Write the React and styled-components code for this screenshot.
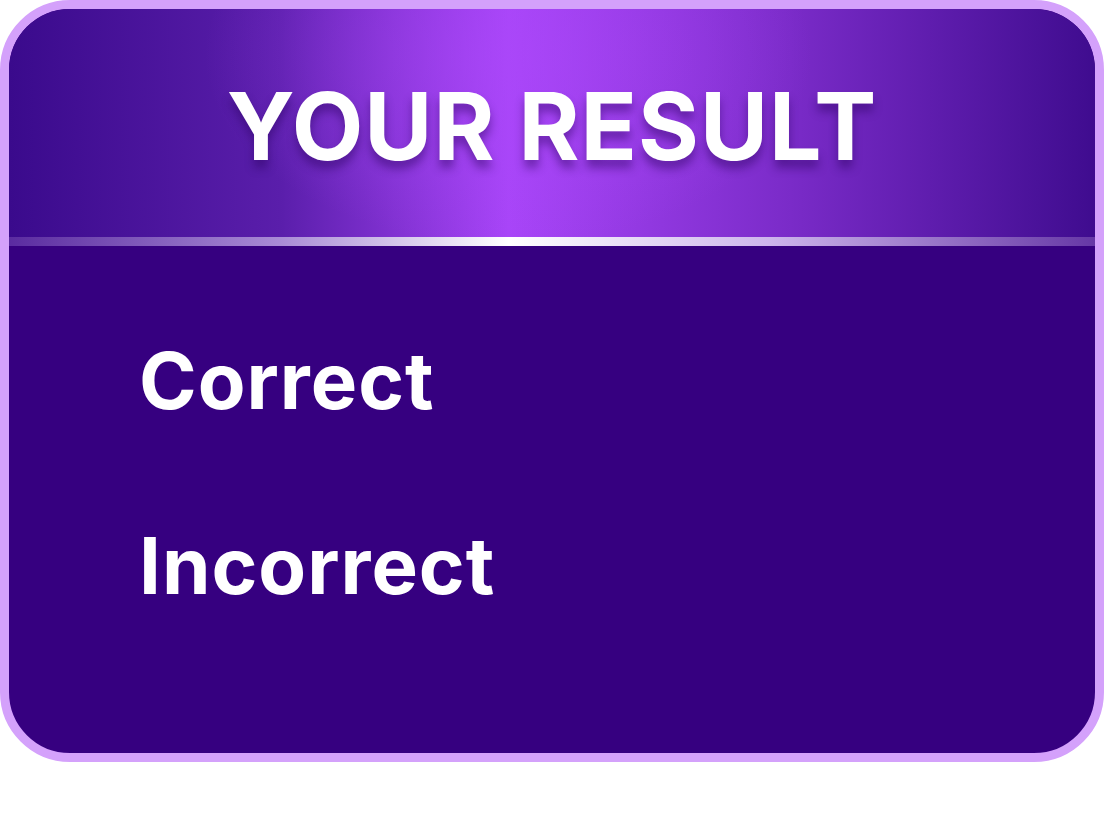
import React from "react";
import styled, { createGlobalStyle } from "styled-components";

const Global = createGlobalStyle`
  html, body {
    margin: 0;
    padding: 0;
    background: #ffffff;
    font-family: Inter, "Noto Sans", sans-serif;
  }
`;

const Card = styled.div`
  width: 1104px;
  height: 762px;
  box-sizing: border-box;
  border: 9px solid #d4a1fb;
  border-radius: 70px;
  overflow: hidden;
  background: #360080;
  display: flex;
  flex-direction: column;
`;

const Header = styled.div`
  height: 228px;
  display: flex;
  align-items: center;
  justify-content: center;
  background:
    radial-gradient(ellipse 40% 120% at 46% 20%, rgba(172, 72, 250, 0.55), rgba(172, 72, 250, 0) 70%),
    linear-gradient(90deg, #3a0a8c 0%, #5a1eab 25%, #a845f8 46%, #7a2bc8 72%, #3f0c8f 100%);
`;

const Title = styled.h1`
  margin: 0;
  padding-top: 6px;
  font-size: 93px;
  font-weight: 700;
  letter-spacing: 1px;
  color: #ffffff;
  text-shadow: 0 8px 10px rgba(40, 0, 90, 0.45);
`;

const Divider = styled.div`
  height: 9px;
  background: linear-gradient(
    90deg,
    #5a2ba0 0%,
    #a98bd6 25%,
    #ffffff 46%,
    #cdb5ec 70%,
    #6637a6 100%
  );
`;

const Body = styled.div`
  flex: 1;
  display: flex;
  flex-direction: column;
  gap: 107px;
  padding: 96px 0 0 130px;
`;

const Choice = styled.div`
  font-size: 78px;
  font-weight: 700;
  line-height: 1;
  letter-spacing: 1px;
  color: #ffffff;
`;

export default function App() {
  return (
    <>
      <Global />
      <Card>
        <Header>
          <Title>YOUR RESULT</Title>
        </Header>
        <Divider />
        <Body>
          <Choice>Correct</Choice>
          <Choice>Incorrect</Choice>
        </Body>
      </Card>
    </>
  );
}
